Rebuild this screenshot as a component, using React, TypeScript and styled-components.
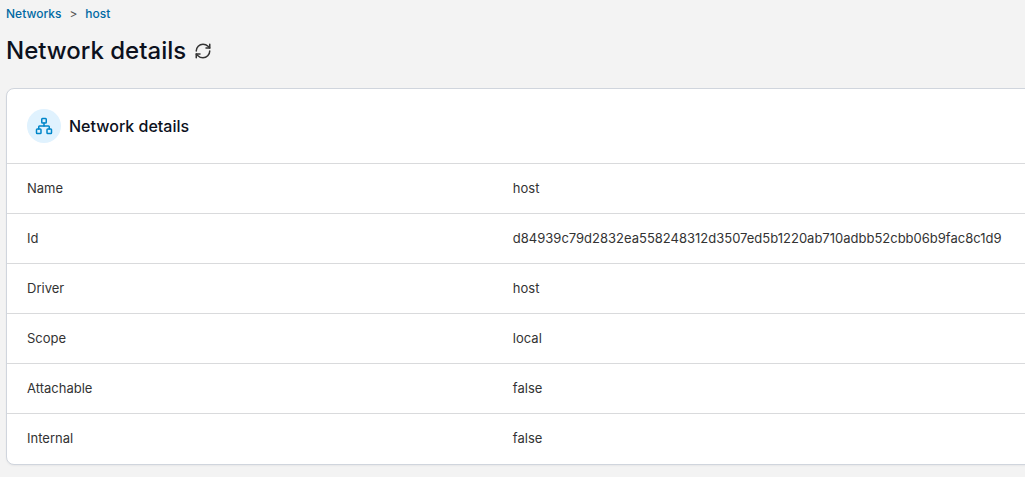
import React from "react";
import styled, { createGlobalStyle } from "styled-components";
import { RefreshCw, Network } from "lucide-react";

const GlobalStyle = createGlobalStyle`
  * { box-sizing: border-box; }
  body {
    margin: 0;
    background: #f3f3f3;
    color: #333;
    font-family: Inter, "Liberation Sans", sans-serif;
    font-size: 13px;
    overflow-x: hidden;
  }
`;

const Page = styled.main`
  padding: 4px 0 12px 6px;
`;

const Breadcrumbs = styled.nav`
  display: flex;
  gap: 8px;
  font-size: 12px;
  line-height: 20px;
`;

const Crumb = styled.a`
  color: #0069a3;
  font-weight: 500;
  text-decoration: none;
`;

const Separator = styled.span`
  color: #555;
`;

const TitleRow = styled.header`
  display: flex;
  align-items: center;
  gap: 8px;
  height: 32px;
  margin: 11px 0 21px;
`;

const Title = styled.h1`
  margin: 0;
  color: #0c111d;
  font-size: 24px;
  font-weight: 500;
  line-height: 32px;
`;

const RefreshButton = styled.button`
  display: flex;
  padding: 0;
  border: 0;
  background: none;
  color: #333;
  cursor: pointer;
`;

const Card = styled.section`
  margin-right: -16px;
  border: 1px solid #d0d5dd;
  border-radius: 8px;
  background: #fff;
  box-shadow: 0 1px 2px rgba(16, 24, 40, 0.05);
  overflow: hidden;
`;

const CardHeader = styled.div`
  display: flex;
  align-items: center;
  gap: 8px;
  padding: 20px;
`;

const IconBadge = styled.span`
  display: flex;
  align-items: center;
  justify-content: center;
  width: 34px;
  height: 34px;
  border-radius: 50%;
  background: #e0f2fe;
  color: #0086c9;
`;

const CardTitle = styled.h2`
  margin: 0;
  color: #0c111d;
  font-size: 16px;
  font-weight: 500;
  line-height: 24px;
`;

const DetailsTable = styled.table`
  width: 100%;
  border-collapse: collapse;
  table-layout: fixed;
`;

const Label = styled.th`
  width: 48%;
  height: 50px;
  padding: 0 20px 2px;
  border-top: 1px solid #d9dadc;
  font-weight: 400;
  text-align: left;
`;

const Value = styled.td`
  padding: 0 10px 2px;
  border-top: 1px solid #d9dadc;
`;

const details = [
  ["Name", "host"],
  ["Id", "d84939c79d2832ea558248312d3507ed5b1220ab710adbb52cbb06b9fac8c1d9"],
  ["Driver", "host"],
  ["Scope", "local"],
  ["Attachable", "false"],
  ["Internal", "false"],
];

export default function App() {
  return (
    <>
      <GlobalStyle />
      <Page>
        <Breadcrumbs aria-label="Breadcrumb">
          <Crumb href="#networks">Networks</Crumb>
          <Separator>&gt;</Separator>
          <Crumb href="#host">host</Crumb>
        </Breadcrumbs>
        <TitleRow>
          <Title>Network details</Title>
          <RefreshButton type="button" aria-label="Refresh">
            <RefreshCw size={18} strokeWidth={2} />
          </RefreshButton>
        </TitleRow>
        <Card>
          <CardHeader>
            <IconBadge><Network size={18} strokeWidth={2} /></IconBadge>
            <CardTitle>Network details</CardTitle>
          </CardHeader>
          <DetailsTable>
            <tbody>
              {details.map(([label, value]) => (
                <tr key={label}>
                  <Label scope="row">{label}</Label>
                  <Value>{value}</Value>
                </tr>
              ))}
            </tbody>
          </DetailsTable>
        </Card>
      </Page>
    </>
  );
}
